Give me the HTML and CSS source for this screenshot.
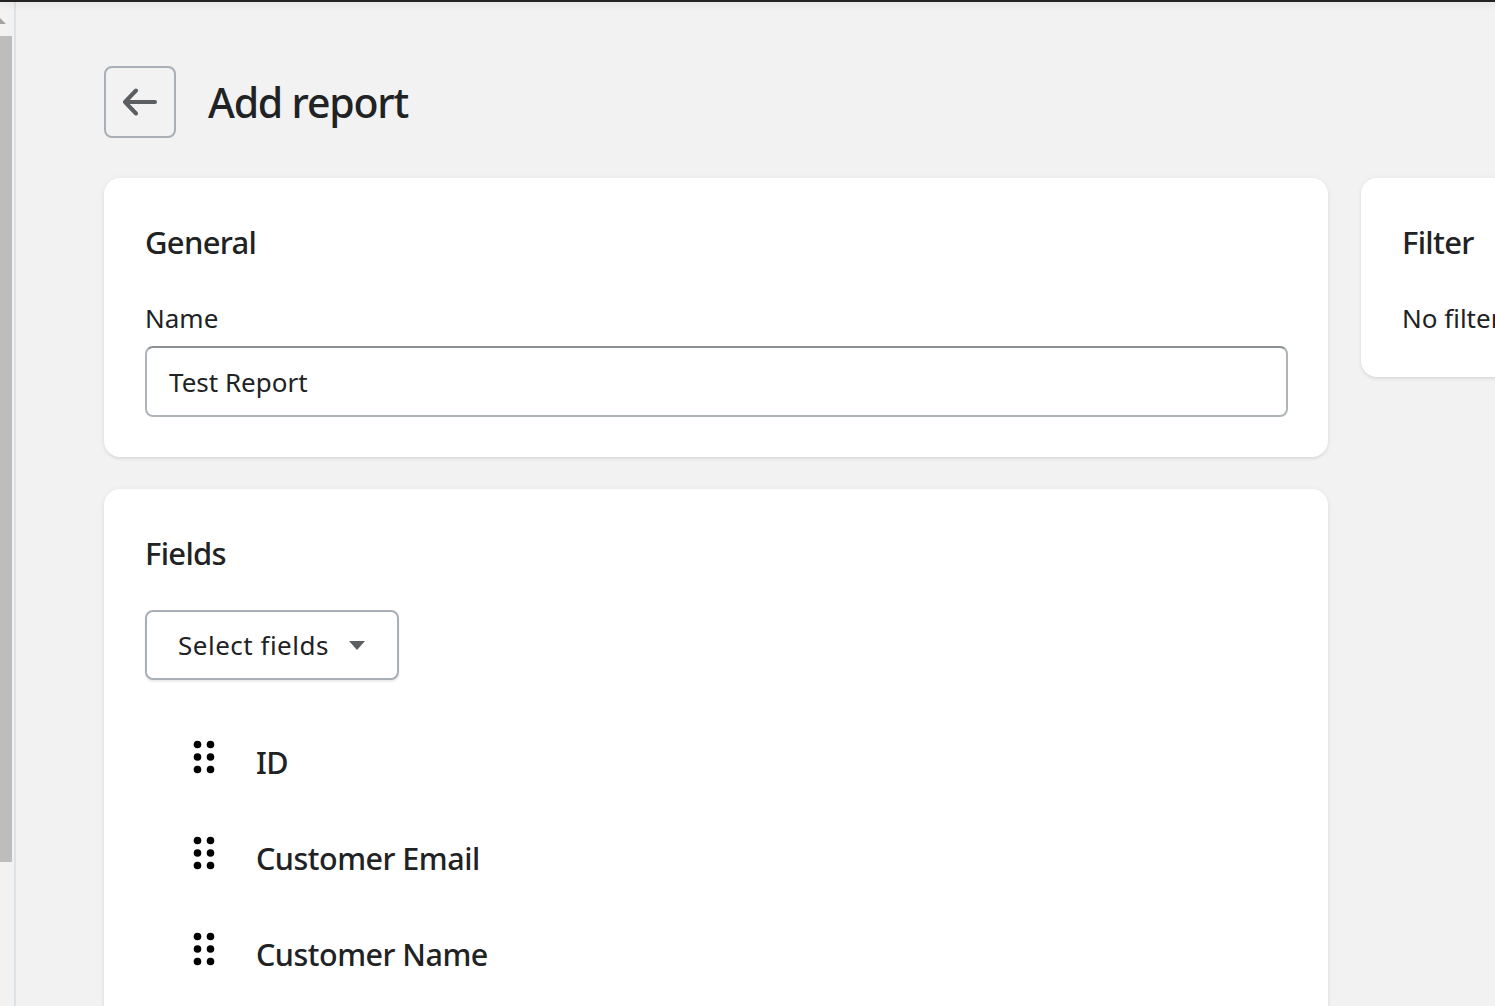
FILE: index.html
```html
<!DOCTYPE html>
<html lang="en">
<head>
<meta charset="utf-8">
<title>Add report</title>
<link rel="stylesheet" href="styles.css">
</head>
<body>
<div class="topbar"></div>
<div class="frame">
  <div class="gutter">
    <div class="gutter-arrow"></div>
    <div class="gutter-thumb"></div>
  </div>
  <main class="page">
    <header class="page-header">
      <button class="back-btn" type="button" aria-label="Back">
        <svg width="36" height="28" viewBox="0 0 36 28" fill="none" stroke="#5c5f62" stroke-width="4" stroke-linecap="round" stroke-linejoin="round">
          <path d="M33 14H3M14 2.5L3 14l11 11.5"/>
        </svg>
      </button>
      <h1 class="page-title">Add report</h1>
    </header>
    <div class="layout">
      <div class="primary">
        <section class="card">
          <h2 class="card-title">General</h2>
          <div class="field">
            <label class="label">Name</label>
            <div class="input">Test Report</div>
          </div>
        </section>
        <section class="card">
          <h2 class="card-title">Fields</h2>
          <div class="field">
            <button class="select-btn" type="button">
              <span>Select fields</span>
              <svg class="caret" width="16" height="9" viewBox="0 0 16 9"><path d="M0 0h16L8 9z" fill="#5c5f62"/></svg>
            </button>
          </div>
          <ul class="field-list">
            <li class="field-item">
              <svg class="handle" width="22" height="34" viewBox="0 0 22 34"><g fill="#000"><circle cx="4.5" cy="4.5" r="3.8"/><circle cx="17.5" cy="4.5" r="3.8"/><circle cx="4.5" cy="17" r="3.8"/><circle cx="17.5" cy="17" r="3.8"/><circle cx="4.5" cy="29.5" r="3.8"/><circle cx="17.5" cy="29.5" r="3.8"/></g></svg>
              <span class="item-text">ID</span>
            </li>
            <li class="field-item">
              <svg class="handle" width="22" height="34" viewBox="0 0 22 34"><g fill="#000"><circle cx="4.5" cy="4.5" r="3.8"/><circle cx="17.5" cy="4.5" r="3.8"/><circle cx="4.5" cy="17" r="3.8"/><circle cx="17.5" cy="17" r="3.8"/><circle cx="4.5" cy="29.5" r="3.8"/><circle cx="17.5" cy="29.5" r="3.8"/></g></svg>
              <span class="item-text">Customer Email</span>
            </li>
            <li class="field-item">
              <svg class="handle" width="22" height="34" viewBox="0 0 22 34"><g fill="#000"><circle cx="4.5" cy="4.5" r="3.8"/><circle cx="17.5" cy="4.5" r="3.8"/><circle cx="4.5" cy="17" r="3.8"/><circle cx="17.5" cy="17" r="3.8"/><circle cx="4.5" cy="29.5" r="3.8"/><circle cx="17.5" cy="29.5" r="3.8"/></g></svg>
              <span class="item-text">Customer Name</span>
            </li>
          </ul>
        </section>
      </div>
      <aside class="secondary">
        <section class="card card-filter">
          <h2 class="card-title">Filter</h2>
          <p class="muted-line">No filters</p>
        </section>
      </aside>
    </div>
  </main>
</div>
</body>
</html>
```
FILE: styles.css
```css
html, body {
  margin: 0;
  padding: 0;
  overflow: hidden;
  height: 100%;
}
body {
  background: #f2f2f2;
  font-family: "Noto Sans", "Open Sans", sans-serif;
  color: #202223;
}
.topbar {
  position: relative;
  z-index: 2;
  height: 2px;
  background: #232323;
  box-shadow: 0 1px 8px rgba(0, 0, 0, 0.18);
}
.frame {
  display: flex;
  height: calc(100% - 2px);
}
.gutter {
  flex: 0 0 14px;
  border-right: 2px solid #dde2e7;
  display: flex;
  flex-direction: column;
}
.gutter-arrow {
  margin-top: 16px;
  width: 0;
  height: 0;
  border-bottom: 6px solid #a3a3a3;
  border-right: 6px solid transparent;
}
.gutter-thumb {
  margin-top: 12px;
  width: 12px;
  height: 826px;
  background: #bdbdbd;
}
.page {
  flex: 1;
  padding: 64px 0 0 88px;
  min-width: 0;
}
.page-header {
  display: flex;
  align-items: center;
  gap: 32px;
}
.back-btn {
  width: 72px;
  height: 72px;
  box-sizing: border-box;
  border: 2px solid #a9afb6;
  border-radius: 8px;
  background: transparent;
  display: flex;
  align-items: center;
  justify-content: center;
  padding: 0;
}
.page-title {
  margin: 0;
  font-size: 41px;
  font-weight: 500;
  letter-spacing: -1.2px;
  line-height: 56px;
}
.layout {
  display: grid;
  grid-template-columns: 1224px 560px;
  gap: 33px;
  margin-top: 40px;
  align-items: start;
}
.primary {
  display: flex;
  flex-direction: column;
  gap: 32px;
}
.card {
  background: #fff;
  border-radius: 16px;
  padding: 40px 40px 40px 41px;
  box-shadow: 0 0 6px rgba(0, 0, 0, 0.05), 0 2px 3px rgba(0, 0, 0, 0.07);
}
.card-title {
  margin: 0;
  font-size: 31px;
  font-weight: 500;
  letter-spacing: -0.7px;
  line-height: 48px;
}
.field {
  margin-top: 33px;
}
.label {
  display: block;
  font-size: 26px;
  line-height: 38px;
  margin-bottom: 9px;
}
.input {
  box-sizing: border-box;
  height: 71px;
  border: 2px solid #aeb4b9;
  border-top-color: #8c9196;
  border-radius: 8px;
  padding: 0 22px;
  display: flex;
  align-items: center;
  font-size: 26px;
}
.select-btn {
  box-sizing: border-box;
  height: 70px;
  width: 254px;
  border: 2px solid #a9afb6;
  border-radius: 8px;
  background: #fff;
  box-shadow: 0 2px 2px rgba(0, 0, 0, 0.08);
  display: flex;
  align-items: center;
  gap: 20px;
  padding: 0 31px;
  font-family: inherit;
  font-size: 26px;
  letter-spacing: 0.5px;
  color: #202223;
}
.field-list {
  list-style: none;
  margin: 34px 0 0;
  padding: 0 0 0 48px;
}
.field-item {
  height: 96px;
  display: flex;
  align-items: center;
  gap: 41px;
}
.handle {
  margin-bottom: 10px;
  flex: none;
}
.item-text {
  font-size: 30.5px;
  font-weight: 500;
  letter-spacing: -0.5px;
}
.muted-line {
  margin: 33px 0 0;
  font-size: 26px;
  line-height: 38px;
  white-space: nowrap;
}
```
